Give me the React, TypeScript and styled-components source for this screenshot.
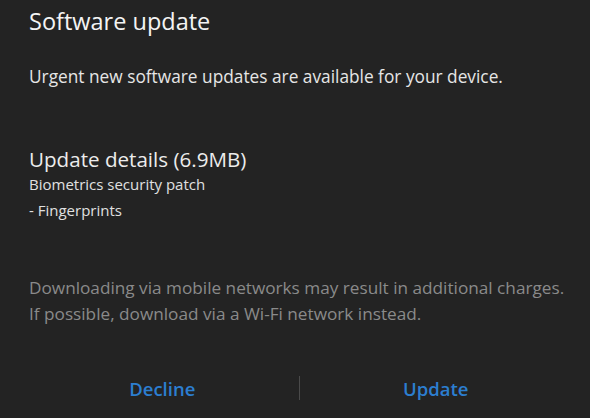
import styled, { createGlobalStyle } from "styled-components";

const Global = createGlobalStyle`
  html, body {
    margin: 0;
    padding: 0;
    background: #232323;
  }
  body {
    font-family: "Open Sans", "Noto Sans", sans-serif;
  }
`;

const Dialog = styled.div`
  width: 590px;
  height: 418px;
  box-sizing: border-box;
  background: #232323;
  padding: 0 29px;
  display: flex;
  flex-direction: column;
  overflow: hidden;
`;

const Title = styled.h1`
  margin: 4px 0 0;
  font-size: 23.5px;
  line-height: 34px;
  font-weight: 500;
  color: #f4f4f4;
`;

const Message = styled.p`
  margin: 27px 0 0;
  font-size: 17.3px;
  line-height: 24px;
  color: #e6e6e6;
  white-space: nowrap;
`;

const DetailsTitle = styled.h2`
  margin: 58px 0 0;
  font-size: 20.6px;
  line-height: 24px;
  font-weight: 400;
  color: #ececec;
`;

const DetailLine = styled.div`
  font-size: 15px;
  line-height: 26px;
  color: #e0e0e0;
`;

const Notice = styled.p`
  margin: 52px 0 0;
  font-size: 17.2px;
  line-height: 26px;
  color: #8a8a8a;
  white-space: nowrap;
`;

const Buttons = styled.div`
  margin: 37px -11px 0 -3px;
  display: grid;
  grid-template-columns: 1fr 1px 1fr;
  align-items: center;
  height: 48px;
`;

const Button = styled.button`
  justify-self: center;
  background: none;
  border: none;
  padding: 0;
  font-family: inherit;
  font-size: 18.5px;
  font-weight: 600;
  color: #2c7ed0;
  cursor: pointer;
`;

const Divider = styled.div`
  width: 1px;
  height: 24px;
  background: #4a4a4a;
`;

export default function App() {
  return (
    <>
      <Global />
      <Dialog>
        <Title>Software update</Title>
        <Message>Urgent new software updates are available for your device.</Message>
        <DetailsTitle>Update details (6.9MB)</DetailsTitle>
        <DetailLine>Biometrics security patch</DetailLine>
        <DetailLine>- Fingerprints</DetailLine>
        <Notice>
          Downloading via mobile networks may result in additional charges.
          <br />
          If possible, download via a Wi-Fi network instead.
        </Notice>
        <Buttons>
          <Button>Decline</Button>
          <Divider />
          <Button>Update</Button>
        </Buttons>
      </Dialog>
    </>
  );
}
